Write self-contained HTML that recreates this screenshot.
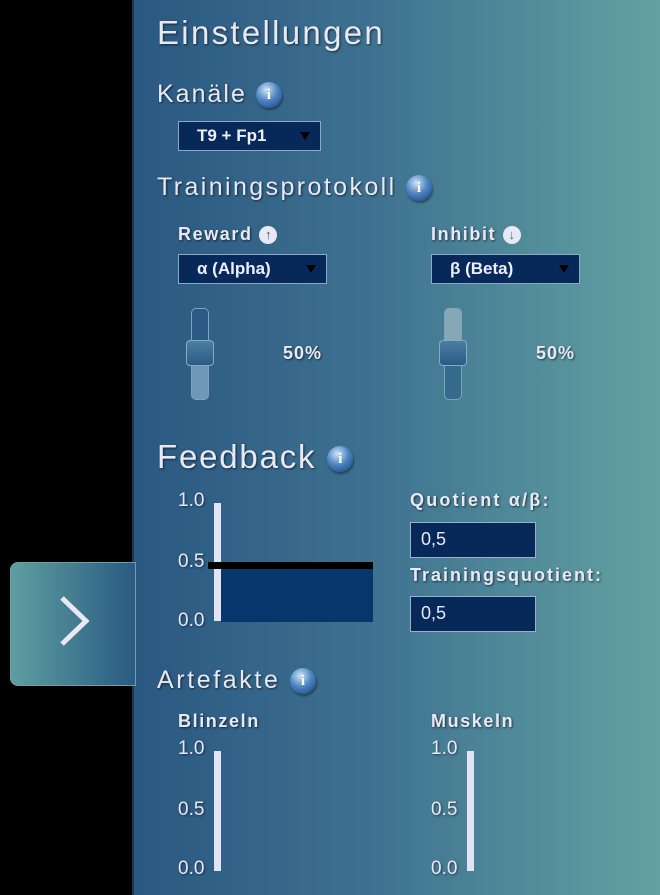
<!DOCTYPE html>
<html><head><meta charset="utf-8"><style>
*{margin:0;padding:0;box-sizing:border-box}
body{width:660px;height:895px;background:#000;position:relative;overflow:hidden;font-family:"Liberation Sans",sans-serif;color:#e8e9f5}
#panel{position:absolute;left:132px;top:0;width:528px;height:895px;background:linear-gradient(90deg,#2a5881 0%,#3e7190 45%,#62a2a2 100%);border-left:2px solid #1c3550}
.a{position:absolute;white-space:nowrap;text-shadow:1px 1px 2px rgba(0,0,0,.6)}
.h1{font-size:33px;letter-spacing:2.3px}
.h2{font-size:25px;letter-spacing:2px}
.h3{font-size:18px;font-weight:bold;letter-spacing:1.6px}
.sel{position:absolute;background:#06295a;border:1px solid #8fa9c4;font-size:17px;font-weight:bold;padding-left:18px;line-height:27px;color:#eef}
.sel:after{content:"";position:absolute;right:10px;top:10px;border:5px solid transparent;border-top:8px solid #000;border-bottom:0}
.info{display:inline-block;width:26px;height:26px;border-radius:50%;background:radial-gradient(circle at 40% 30%,#cfe3f6 0%,#4f86c2 45%,#123f7a 100%);color:#fff;font:bold 15px "Liberation Serif",serif;text-align:center;line-height:26px;vertical-align:middle;text-shadow:none;box-shadow:1px 2px 2px rgba(0,0,0,.4);letter-spacing:0}
.inp{position:absolute;background:#06295a;border:1px solid #9bb0c8;font-size:18px;padding-left:10px;line-height:32px}
.track{position:absolute;width:18px;height:92px;border-radius:5px;border:1px solid #7fa3bd}
.thumb{position:absolute;width:28px;height:26px;border-radius:4px;background:linear-gradient(#4b7ea3,#2b5b84);border:1px solid #86aac4}
.bar{position:absolute;width:7px;background:#e2e4f6}
.lbl{position:absolute;font-size:19px;text-shadow:1px 1px 2px rgba(0,0,0,.5)}
.ic{display:inline-block;width:18px;height:18px;border-radius:50%;background:#e8e9f5;font-size:13px;text-align:center;line-height:18px;vertical-align:1px;text-shadow:none;letter-spacing:0}
</style></head><body>
<div id="panel"></div>
<div class="a h1" style="left:157px;top:14px">Einstellungen</div>
<div class="a h2" style="left:157px;top:80px">Kanäle <span class="info">i</span></div>
<div class="sel" style="left:178px;top:121px;width:143px;height:30px">T9 + Fp1</div>
<div class="a h2" style="left:157px;top:173px;letter-spacing:2.4px">Trainingsprotokoll <span class="info">i</span></div>
<div class="a h3" style="left:178px;top:224px">Reward <span class="ic" style="color:#2f5e86">↑</span></div>
<div class="a h3" style="left:431px;top:224px">Inhibit <span class="ic" style="color:#3d6e8c">↓</span></div>
<div class="sel" style="left:178px;top:254px;width:149px;height:30px">α (Alpha)</div>
<div class="sel" style="left:431px;top:254px;width:149px;height:30px">β (Beta)</div>
<div class="track" style="left:191px;top:308px;background:linear-gradient(#2b5b84 0 45%,#6f97b8 45%)"></div>
<div class="thumb" style="left:186px;top:340px"></div>
<div class="track" style="left:444px;top:308px;background:linear-gradient(#86a8b6 0 45%,#356b8a 45%)"></div>
<div class="thumb" style="left:439px;top:340px"></div>
<div class="a h3" style="left:283px;top:343px;font-size:18px;letter-spacing:1px">50%</div>
<div class="a h3" style="left:536px;top:343px;font-size:18px;letter-spacing:1px">50%</div>
<div class="a h1" style="left:157px;top:438px;letter-spacing:1.8px">Feedback <span class="info">i</span></div>
<div class="lbl" style="left:178px;top:490px">1.0</div>
<div class="lbl" style="left:178px;top:551px">0.5</div>
<div class="lbl" style="left:178px;top:610px">0.0</div>
<div class="bar" style="left:214px;top:503px;height:118px"></div>
<div style="position:absolute;left:221px;top:569px;width:152px;height:53px;background:#06366c"></div>
<div style="position:absolute;left:208px;top:562px;width:165px;height:7px;background:#000"></div>
<div class="a h3" style="left:410px;top:490px;letter-spacing:2.2px">Quotient α/β:</div>
<div class="inp" style="left:410px;top:522px;width:126px;height:36px">0,5</div>
<div class="a h3" style="left:410px;top:565px;letter-spacing:2px">Trainingsquotient:</div>
<div class="inp" style="left:410px;top:596px;width:126px;height:36px">0,5</div>
<div style="position:absolute;left:10px;top:562px;width:126px;height:124px;border-radius:8px 0 0 8px;background:linear-gradient(90deg,#5e9e9f,#2a5a82);border:1px solid #6aa2a6"></div>
<svg style="position:absolute;left:56px;top:594px" width="40" height="54"><path d="M6 4 L30 27 L6 50" stroke="#e8e9f5" stroke-width="5" fill="none"/></svg>
<div class="a h2" style="left:157px;top:666px;letter-spacing:2.6px">Artefakte <span class="info">i</span></div>
<div class="a h3" style="left:178px;top:711px">Blinzeln</div>
<div class="a h3" style="left:431px;top:711px">Muskeln</div>
<div class="lbl" style="left:178px;top:738px">1.0</div>
<div class="lbl" style="left:178px;top:799px">0.5</div>
<div class="lbl" style="left:178px;top:858px">0.0</div>
<div class="bar" style="left:214px;top:751px;height:120px"></div>
<div class="lbl" style="left:431px;top:738px">1.0</div>
<div class="lbl" style="left:431px;top:799px">0.5</div>
<div class="lbl" style="left:431px;top:858px">0.0</div>
<div class="bar" style="left:467px;top:751px;height:120px"></div>
</body></html>
